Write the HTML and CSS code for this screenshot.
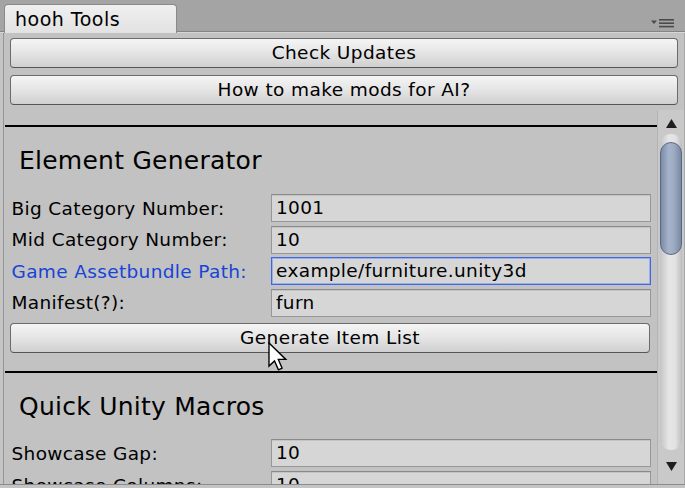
FILE: index.html
```html
<!DOCTYPE html>
<html>
<head>
<meta charset="utf-8">
<link rel="stylesheet" href="styles.css">
</head>
<body>
<div class="window">
  <div class="tabstrip">
    <div class="tab">hooh Tools</div>
    <svg class="menu-icon" width="24" height="9" viewBox="0 0 24 9">
      <path d="M0 1.5 H6 L3 5 Z" fill="#4a4a4a"/>
      <rect x="8" y="0" width="15" height="1.6" fill="#4a4a4a"/>
      <rect x="8" y="3.4" width="15" height="1.6" fill="#4a4a4a"/>
      <rect x="8" y="6.8" width="15" height="1.6" fill="#4a4a4a"/>
    </svg>
  </div>
  <div class="panel">
    <div class="top-buttons">
      <button class="btn">Check Updates</button>
      <button class="btn">How to make mods for AI?</button>
    </div>
    <div class="scrollview">
      <div class="content">
        <div class="sep"></div>
        <h2 class="heading">Element Generator</h2>
        <div class="form">
          <div class="row"><span class="label">Big Category Number:</span><span class="field">1001</span></div>
          <div class="row"><span class="label">Mid Category Number:</span><span class="field">10</span></div>
          <div class="row"><span class="label active">Game Assetbundle Path:</span><span class="field focused">example/furniture.unity3d</span></div>
          <div class="row"><span class="label">Manifest(?):</span><span class="field">furn</span></div>
        </div>
        <button class="btn gen">Generate Item List</button>
        <div class="sep sep2"></div>
        <h2 class="heading">Quick Unity Macros</h2>
        <div class="form form2">
          <div class="row"><span class="label">Showcase Gap:</span><span class="field">10</span></div>
          <div class="row"><span class="label">Showcase Columns:</span><span class="field">10</span></div>
        </div>
      </div>
      <div class="scrollbar">
        <div class="arrow"><svg width="11" height="9" viewBox="0 0 11 9"><path d="M5.5 0 L11 9 H0 Z" fill="#1e1e1e"/></svg></div>
        <div class="track"><div class="thumb"></div></div>
        <div class="arrow down"><svg width="11" height="9" viewBox="0 0 11 9"><path d="M0 0 H11 L5.5 9 Z" fill="#1e1e1e"/></svg></div>
      </div>
    </div>
  </div>
</div>
<svg class="cursor" width="20" height="29" viewBox="0 0 13 19">
  <path d="M0.6 0.6 L0.6 15.8 L4.2 12.4 L6.8 18.2 L9.2 17.2 L6.7 11.4 L11.6 11.4 Z" fill="#ffffff" stroke="#000000" stroke-width="0.9" stroke-linejoin="miter"/>
</svg>
</body>
</html>
```
FILE: styles.css
```css
html, body {
  margin: 0;
  padding: 0;
}
body {
  width: 685px;
  height: 488px;
  overflow: hidden;
  background: #c4c4c4;
  font-family: "DejaVu Sans", Verdana, sans-serif;
  color: #000;
  position: relative;
}
.window {
  height: 484px;
  display: flex;
  flex-direction: column;
  border-bottom: 1px solid #8c8c8c;
}
.tabstrip {
  height: 32px;
  flex: none;
  background: #a4a4a4;
  display: flex;
  align-items: flex-end;
  padding-left: 4px;
  padding-right: 10px;
  border-bottom: 1px solid #d6d6d6;
  box-shadow: inset 0 -1px 0 #858585;
}
.tab {
  width: 161px;
  height: 28px;
  margin-bottom: -1px;
  padding-left: 10px;
  background: linear-gradient(#efefef, #e2e2e2);
  border: 1px solid #8a8a8a;
  border-bottom: none;
  border-radius: 4px 4px 0 0;
  font-size: 19px;
  line-height: 28px;
  letter-spacing: 0.5px;
  position: relative;
  z-index: 1;
}
.menu-icon {
  margin-left: auto;
  margin-bottom: 4px;
}
.panel {
  flex: 1;
  display: flex;
  flex-direction: column;
  margin-left: 3px;
  border-left: 1px solid #959595;
  border-right: 1px solid #a8a8a8;
  background: #c2c2c2;
  min-height: 0;
}
.top-buttons {
  display: flex;
  flex-direction: column;
  gap: 7px;
  padding: 5px 6px 5px 6px;
}
.btn {
  display: block;
  width: 100%;
  height: 30px;
  margin: 0;
  padding: 0;
  border: 1px solid #6b6b6b;
  border-bottom-color: #555;
  border-radius: 4px;
  background: linear-gradient(#f5f5f5 0%, #e6e6e6 45%, #d0d0d0 100%);
  font-family: "DejaVu Sans", Verdana, sans-serif;
  font-size: 18.5px;
  letter-spacing: 0.4px;
  line-height: 28px;
  color: #000;
  text-align: center;
}
.scrollview {
  flex: 1;
  display: flex;
  min-height: 0;
  overflow: hidden;
}
.content {
  flex: 1;
  padding: 15px 6px 0 6px;
  overflow: hidden;
}
.sep {
  height: 2px;
  background: #000;
  margin: 0 -6px 0 -5px;
}
.sep2 {
  margin-top: 18px;
}
.heading {
  margin: 19px 0 18px 9px;
  font-size: 25px;
  font-weight: normal;
  line-height: 30px;
  letter-spacing: 0.25px;
}
.form {
  display: flex;
  flex-direction: column;
  gap: 3.5px;
}
.form2 {
  margin-top: -1px;
  gap: 4px;
}
.row {
  display: flex;
  align-items: center;
  height: 28px;
}
.label {
  width: 259.5px;
  flex: none;
  padding-left: 1.5px;
  font-size: 18.5px;
  letter-spacing: 0.35px;
}
.label.active {
  color: #1645d8;
}
.field {
  flex: 1;
  box-sizing: border-box;
  height: 28px;
  padding-left: 4px;
  background: #d6d6d6;
  border: 1px solid #979797;
  border-top-color: #8a8a8a;
  box-shadow: inset 0 1px 0 #c4c4c4;
  font-size: 18.5px;
  letter-spacing: 0.35px;
  line-height: 26px;
}
.field.focused {
  border: 1px solid #3f67e2;
  box-shadow: inset 0 0 0 1px #9aaeea;
}
.gen {
  margin-top: 6.5px;
  width: 640px;
}
.scrollbar {
  width: 26px;
  flex: none;
  background: #c9c9c9;
  border-left: 1px solid #b4b4b4;
  display: flex;
  flex-direction: column;
  align-items: center;
}
.arrow {
  height: 20px;
  display: flex;
  align-items: center;
  justify-content: center;
  padding-top: 3px;
}
.arrow.down {
  padding-top: 0;
  height: 16px;
  margin-bottom: 10px;
}
.track {
  width: 22px;
  flex: 1;
  margin-top: 1px;
  margin-bottom: 8px;
  box-sizing: border-box;
  border-radius: 11px;
  background: linear-gradient(90deg, #c4c4c4 0%, #e6e6e6 40%, #e2e2e2 70%, #bdbdbd 100%);
  padding-top: 8px;
}
.thumb {
  height: 113px;
  box-sizing: border-box;
  border: 1px solid #5a6883;
  border-radius: 11px;
  background: linear-gradient(90deg, #7d8ca6 0%, #a5b4ca 40%, #9cabc2 65%, #7a89a3 100%);
}
.cursor {
  position: absolute;
  left: 268px;
  top: 342px;
}
```
